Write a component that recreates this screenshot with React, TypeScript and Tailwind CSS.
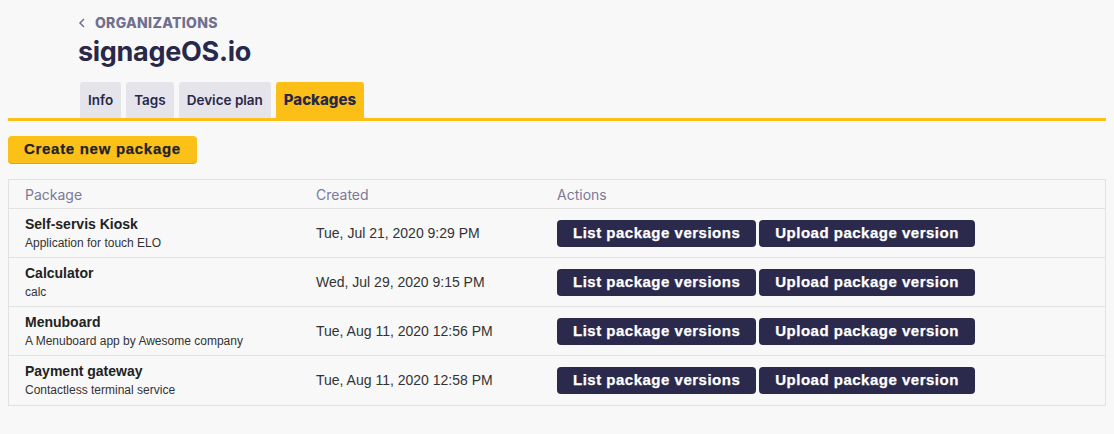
import React from 'react'

interface PackageRow {
  name: string
  description: string
  created: string
}

const packages: PackageRow[] = [
  { name: 'Self-servis Kiosk', description: 'Application for touch ELO', created: 'Tue, Jul 21, 2020 9:29 PM' },
  { name: 'Calculator', description: 'calc', created: 'Wed, Jul 29, 2020 9:15 PM' },
  { name: 'Menuboard', description: 'A Menuboard app by Awesome company', created: 'Tue, Aug 11, 2020 12:56 PM' },
  { name: 'Payment gateway', description: 'Contactless terminal service', created: 'Tue, Aug 11, 2020 12:58 PM' },
]

const tabs = ['Info', 'Tags', 'Device plan', 'Packages']

const muli = "font-['Inter','Lato',sans-serif]"
const arial = "font-['Liberation_Sans',Arial,sans-serif]"

function ActionButton({ children }: { children: React.ReactNode }) {
  return (
    <button
      className={`${arial} h-[27px] rounded-[4px] bg-[#2b2a4c] px-4 text-[15px] font-bold tracking-[0.5px] text-white [-webkit-text-stroke:0.25px_#fff]`}
    >
      {children}
    </button>
  )
}

export default function App() {
  return (
    <div className="min-h-[434px] bg-[#f8f8f8] px-2 pt-[12px]">
      {/* page header */}
      <div className="pl-[70px]">
        <div className={`${muli} flex items-center gap-[9px] text-[14px] font-extrabold tracking-[0.3px] text-[#6f6f8f]`}>
          <svg width="8" height="10" viewBox="0 0 8 10" className="mt-[1px]">
            <path d="M6 1 L2 5 L6 9" fill="none" stroke="#6f6f8f" strokeWidth="1.5" />
          </svg>
          <span>ORGANIZATIONS</span>
        </div>
        <h1 className={`${muli} mt-[2px] text-[27px] leading-[34px] font-bold tracking-[-0.3px] text-[#28284a]`}>
          signageOS.io
        </h1>
        <div className="mt-[13px] flex gap-[5px] pl-[2px]">
          {tabs.map((t) => (
            <div
              key={t}
              className={`${muli} flex h-[36px] items-center rounded-t-[3px] px-[8px] text-[#28284a] ${
                t === 'Packages' ? 'bg-[#fbbf17] text-[15px] font-extrabold' : 'bg-[#e4e4ea] text-[13.5px] font-semibold'
              }`}
            >
              {t}
            </div>
          ))}
        </div>
      </div>
      <div className="h-[3px] bg-[#fbbf17]" />

      {/* create button */}
      <button
        className={`${arial} mt-[15px] h-[27px] rounded-[4px] bg-[#fcc118] px-4 text-[15px] font-bold tracking-[0.7px] text-[#1f1f2f] shadow-[0_1px_0_#e0a800] [-webkit-text-stroke:0.25px_#1f1f2f]`}
      >
        Create new package
      </button>

      {/* table */}
      <div className="mt-[16px] border border-[#e2e2e2]">
        <div className={`${muli} grid h-[29px] grid-cols-[291px_241px_1fr] items-center border-b border-[#e2e2e2] pl-4 text-[14px] text-[#7a7a98]`}>
          <span>Package</span>
          <span>Created</span>
          <span>Actions</span>
        </div>
        {packages.map((p, i) => (
          <div
            key={p.name}
            className={`grid h-[49px] grid-cols-[291px_241px_1fr] items-center pl-4 ${
              i < packages.length - 1 ? 'border-b border-[#e2e2e2]' : ''
            }`}
          >
            <div className={arial}>
              <div className="text-[14px] leading-[17px] font-bold text-[#222]">{p.name}</div>
              <div className="mt-[3px] text-[12px] leading-[15px] text-[#333]">{p.description}</div>
            </div>
            <div className={`${arial} text-[14px] text-[#333]`}>{p.created}</div>
            <div className="flex gap-[3px]">
              <ActionButton>List package versions</ActionButton>
              <ActionButton>Upload package version</ActionButton>
            </div>
          </div>
        ))}
      </div>
    </div>
  )
}
